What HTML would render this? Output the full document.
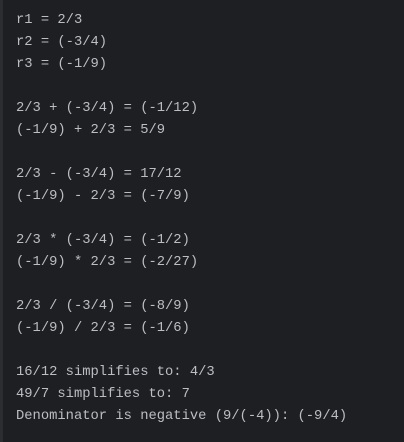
<!DOCTYPE html>
<html><head><meta charset="utf-8"><style>
html,body{margin:0;padding:0;}
body{width:404px;height:442px;background:#1e1f22;overflow:hidden;position:relative;}
.l{position:absolute;left:0;top:0;width:3px;height:442px;background:#2b2d30;}
pre{margin:0;padding:10px 0 0 16px;font-family:"Liberation Mono",monospace;font-size:13.8px;line-height:22px;color:#bcbec4;}
</style></head><body><div class="l"></div><pre>r1 = 2/3
r2 = (-3/4)
r3 = (-1/9)

2/3 + (-3/4) = (-1/12)
(-1/9) + 2/3 = 5/9

2/3 - (-3/4) = 17/12
(-1/9) - 2/3 = (-7/9)

2/3 * (-3/4) = (-1/2)
(-1/9) * 2/3 = (-2/27)

2/3 / (-3/4) = (-8/9)
(-1/9) / 2/3 = (-1/6)

16/12 simplifies to: 4/3
49/7 simplifies to: 7
Denominator is negative (9/(-4)): (-9/4)</pre></body></html>
